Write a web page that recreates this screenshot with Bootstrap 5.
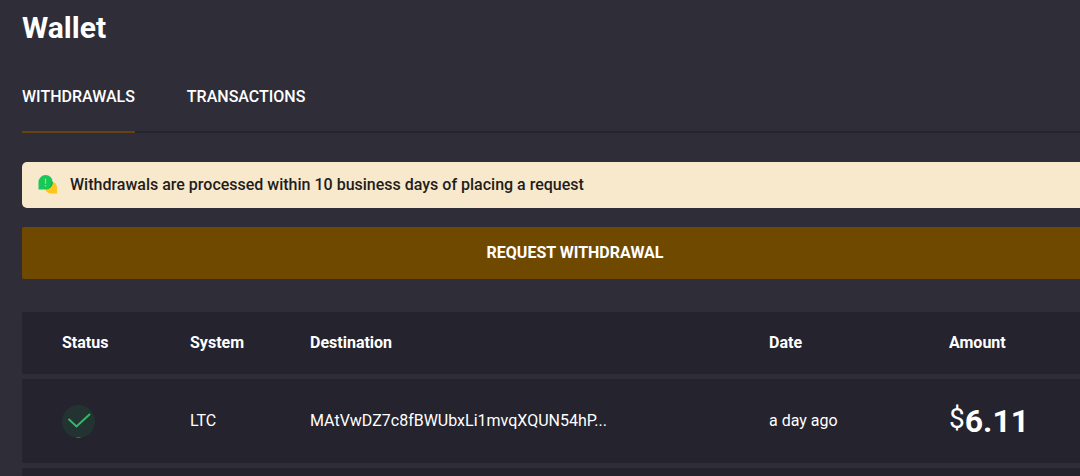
<!DOCTYPE html>
<html lang="en">
<head>
<meta charset="utf-8">
<meta name="viewport" content="width=device-width, initial-scale=1">
<title>Wallet</title>
<link href="https://cdn.jsdelivr.net/npm/bootstrap@5.3.0/dist/css/bootstrap.min.css" rel="stylesheet">
<style>
body { background: #2e2d38; color: #fff; font-family: Roboto, sans-serif; font-size: 16px; line-height: 24px; }
.wallet { margin-left: 22px; margin-right: -48px; padding-top: 10px; }
.wallet-title { font-size: 30px; line-height: 36px; font-weight: 700; margin-bottom: 39px; }
.wallet-tabs { gap: 52px; border-bottom: 2px solid #24232e; }
.wallet-tabs .nav-link { color: #fff; font-weight: 500; padding: 0 0 22px; margin-bottom: -2px; border-bottom: 2px solid transparent; border-radius: 0; }
.wallet-tabs .nav-link.active { border-bottom-color: #63430f; }
.notice { background: #f8e8cc; color: #1f1d1a; border-radius: 5px; padding: 11px 16px; margin-top: 29px; font-weight: 500; gap: 12px; }
.btn-request, .btn-request:hover { background: #704900; color: #fff; font-weight: 700; border: 0; border-radius: 2px; padding: 14px; margin-top: 19px; line-height: 24px; }
.payouts { table-layout: fixed; border-collapse: separate; border-spacing: 0 5px; margin-top: 28px; }
.payouts th, .payouts td { background: #24232e; padding: 0 18px; vertical-align: middle; }
.payouts th { height: 62px; font-weight: 700; }
.payouts td { height: 84px; }
.payouts tr > :first-child { padding-left: 40px; border-radius: 2px 0 0 2px; }
.col-state { width: 150px; }
.col-system { width: 120px; }
.col-date { width: 180px; }
.col-amount { width: 197px; }
.amount { font-size: 32px; line-height: 36px; font-weight: 700; }
.amount .currency { font-size: 28px; font-weight: 400; line-height: 28px; margin-bottom: 4px; }
</style>
</head>
<body>
<div class="vh-100 overflow-hidden">
<main class="wallet">
  <h1 class="wallet-title">Wallet</h1>
  <nav class="nav wallet-tabs" aria-label="Wallet sections">
    <a class="nav-link active" href="#withdrawals" aria-current="page">WITHDRAWALS</a>
    <a class="nav-link" href="#transactions">TRANSACTIONS</a>
  </nav>
  <div class="notice d-flex align-items-center" role="status">
    <svg width="20" height="20" viewBox="0 0 20 20" aria-hidden="true">
      <path d="M13 6.5A6 6 0 1 0 13 18.500H19V12.500A6 6 0 0 0 13 6.500Z" fill="#fec51b"/>
      <path d="M7.500 0A7.200 7.200 0 0 0 .5 7.200V14.500H7.500A7.250 7.250 0 0 0 7.500 0Z" fill="#16c75a"/>
      <path d="M13.500 7A7 7 0 0 1 7.200 14.500H7.500A7.200 7.200 0 0 0 14.700 7.200Z" fill="#14a83f"/>
      <path d="M7.500 3.500V8.700M7.500 10V11.500" stroke="#a6e34a" stroke-width="1.300"/>
    </svg>
    <span>Withdrawals are processed within 10 business days of placing a request</span>
  </div>
  <button type="button" class="btn btn-request w-100">REQUEST WITHDRAWAL</button>
  <table class="payouts w-100" id="withdrawals">
    <colgroup><col class="col-state"><col class="col-system"><col><col class="col-date"><col class="col-amount"></colgroup>
    <thead>
      <tr><th scope="col">Status</th><th scope="col">System</th><th scope="col">Destination</th><th scope="col">Date</th><th scope="col">Amount</th></tr>
    </thead>
    <tbody>
      <tr>
        <td>
          <svg class="d-block" width="33" height="33" viewBox="0 0 33 33" role="img" aria-label="Completed">
            <circle cx="16.500" cy="16.500" r="16.500" fill="#233331"/>
            <path d="M14.500 32.500H18.500" stroke="#42685b" stroke-width="1"/>
            <path d="M6.500 14L14.500 21.500L28 9" fill="none" stroke="#2bbd67" stroke-width="2"/>
          </svg>
        </td>
        <td>LTC</td>
        <td class="text-truncate">MAtVwDZ7c8fBWUbxLi1mvqXQUN54hP...</td>
        <td>a day ago</td>
        <td><div class="amount d-flex align-items-center"><span class="currency">$</span><span>6.11</span></div></td>
      </tr>
      <tr><td></td><td></td><td></td><td></td><td></td></tr>
    </tbody>
  </table>
</main>
</div>
<script src="https://cdn.jsdelivr.net/npm/bootstrap@5.3.0/dist/js/bootstrap.bundle.min.js"></script>
</body>
</html>
